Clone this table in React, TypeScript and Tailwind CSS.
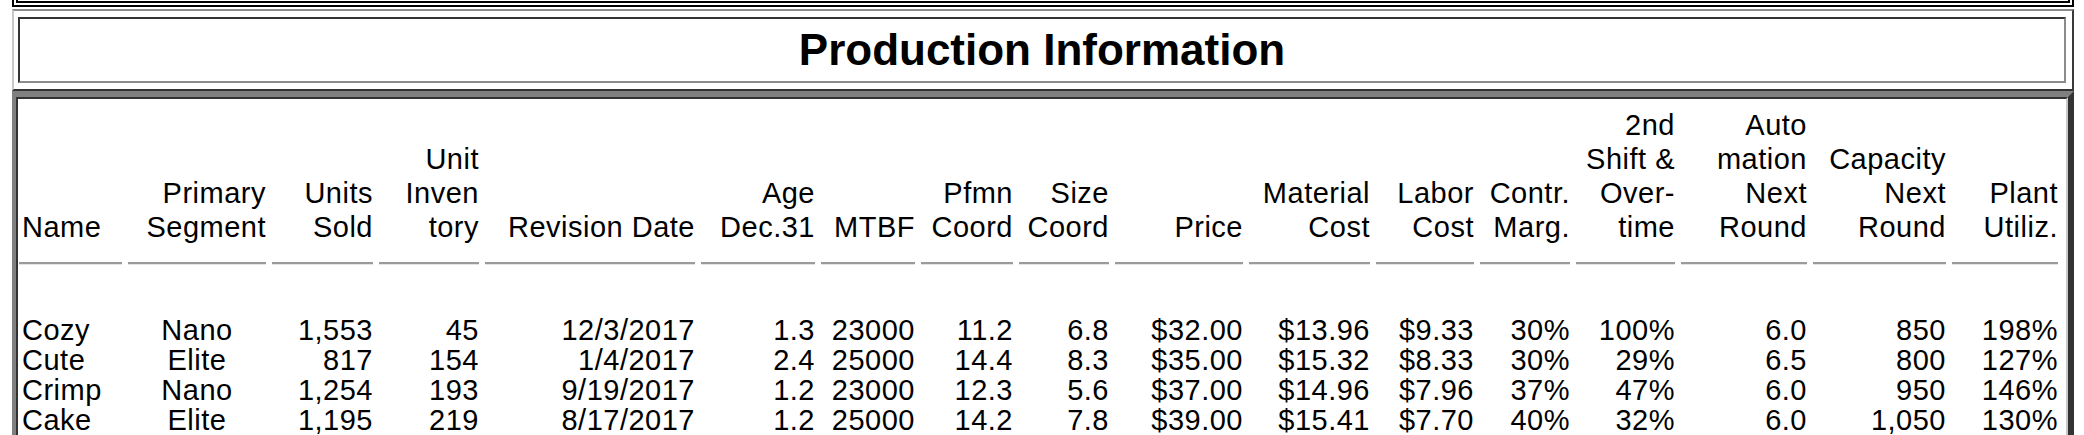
type Column = {
    head: string[];
    headAlign: string;
    cellAlign: string;
};

const columns: Column[] = [
    { head: ["Name"], headAlign: "text-left pl-[3px]", cellAlign: "text-left pl-[3px]" },
    { head: ["Primary", "Segment"], headAlign: "text-right", cellAlign: "text-center" },
    { head: ["Units", "Sold"], headAlign: "text-right", cellAlign: "text-right" },
    { head: ["Unit", "Inven", "tory"], headAlign: "text-right", cellAlign: "text-right" },
    { head: ["Revision Date"], headAlign: "text-right", cellAlign: "text-right" },
    { head: ["Age", "Dec.31"], headAlign: "text-right", cellAlign: "text-right" },
    { head: ["MTBF"], headAlign: "text-right", cellAlign: "text-right" },
    { head: ["Pfmn", "Coord"], headAlign: "text-right", cellAlign: "text-right" },
    { head: ["Size", "Coord"], headAlign: "text-right", cellAlign: "text-right" },
    { head: ["Price"], headAlign: "text-right", cellAlign: "text-right" },
    { head: ["Material", "Cost"], headAlign: "text-right", cellAlign: "text-right" },
    { head: ["Labor", "Cost"], headAlign: "text-right", cellAlign: "text-right" },
    { head: ["Contr.", "Marg."], headAlign: "text-right", cellAlign: "text-right" },
    { head: ["2nd", "Shift &", "Over-", "time"], headAlign: "text-right", cellAlign: "text-right" },
    { head: ["Auto", "mation", "Next", "Round"], headAlign: "text-right", cellAlign: "text-right" },
    { head: ["Capacity", "Next", "Round"], headAlign: "text-right", cellAlign: "text-right" },
    { head: ["Plant", "Utiliz."], headAlign: "text-right", cellAlign: "text-right" },
];

const rows: string[][] = [
    ["Cozy", "Nano", "1,553", "45", "12/3/2017", "1.3", "23000", "11.2", "6.8", "$32.00", "$13.96", "$9.33", "30%", "100%", "6.0", "850", "198%"],
    ["Cute", "Elite", "817", "154", "1/4/2017", "2.4", "25000", "14.4", "8.3", "$35.00", "$15.32", "$8.33", "30%", "29%", "6.5", "800", "127%"],
    ["Crimp", "Nano", "1,254", "193", "9/19/2017", "1.2", "23000", "12.3", "5.6", "$37.00", "$14.96", "$7.96", "37%", "47%", "6.0", "950", "146%"],
    ["Cake", "Elite", "1,195", "219", "8/17/2017", "1.2", "25000", "14.2", "7.8", "$39.00", "$15.41", "$7.70", "40%", "32%", "6.0", "1,050", "130%"],
];

const ProductionTable = () => {
    return (
        <div className="grid grid-cols-[103px_138px_101px_100px_210px_114px_94px_92px_90px_128px_121px_98px_90px_99px_126px_133px_106px] gap-x-[6px] pl-[1px] text-[29px] tracking-[0.5px] text-black">
            {columns.map((col, i) => (
                <div key={"h" + i} className="flex flex-col justify-end leading-[34px]">
                    <div className={col.headAlign}>
                        {col.head.map((line, j) => (
                            <div key={j} className="whitespace-nowrap">{line}</div>
                        ))}
                    </div>
                    {/* old-style <hr> under each heading */}
                    <div className="mt-[18px] mb-[50px] h-[3px] border-t-2 border-b border-t-[#9a9a9a] border-b-[#e4e4e4]"></div>
                </div>
            ))}
            {rows.map((row, r) =>
                row.map((value, c) => (
                    <div key={r + "-" + c} className={`whitespace-nowrap leading-[30px] ${columns[c].cellAlign}`}>
                        {value}
                    </div>
                ))
            )}
        </div>
    );
};

export default function App() {
    return (
        <div className="bg-white w-[2084px] h-[435px] overflow-hidden pl-[12px] pr-[10px] font-['Liberation_Sans','Arial',sans-serif]">
            {/* bottom edge of the previous report box */}
            <div className="h-[7px] border-x-2 border-b-2 border-black">
                <div className="mx-[2px] h-[3px] border-x-2 border-b-2 border-black"></div>
            </div>

            {/* title box */}
            <div className="mt-[2px] border-2 border-t-[#8c8c8c] border-l-[#c8c8c8] border-r-[#3a3a3a] border-b-[#333333] pt-[6px] pb-[6px] pl-[4px] pr-[6px]">
                <div className="h-[66px] border-2 border-t-[#333333] border-l-[#333333] border-r-[#8c8c8c] border-b-[#8c8c8c] flex items-center justify-center">
                    <h1 className="text-[44px] leading-[50px] font-bold text-black">Production Information</h1>
                </div>
            </div>

            {/* data box */}
            <div className="border-t-[6px] border-l-[4px] border-r-[6px] border-b-[6px] border-t-[#808080] border-l-[#808080] border-r-[#333333] border-b-[#333333]">
                <div className="border-2 border-t-[#333333] border-l-[#333333] border-r-[#c8c8c8] border-b-[#c8c8c8] pt-[9px] pb-[20px] pr-[7px]">
                    <ProductionTable />
                </div>
            </div>
        </div>
    );
}
